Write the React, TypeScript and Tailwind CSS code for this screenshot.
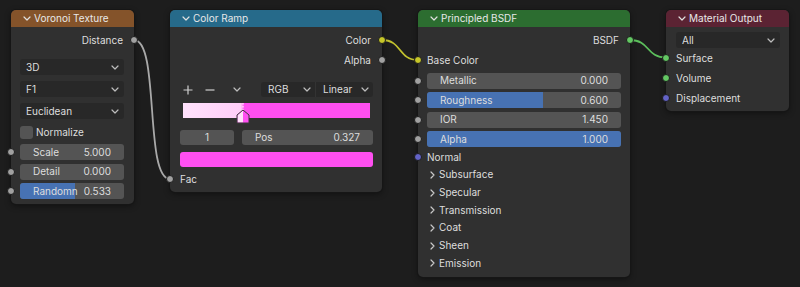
import type { ReactNode } from 'react';

const font = "font-['Inter','Noto_Sans',sans-serif]";

function ChevronDown({ className = '' }: { className?: string }) {
  return (
    <svg width="8" height="5" viewBox="0 0 8 5" className={className}>
      <path d="M1 1l3 3 3-3" fill="none" stroke="currentColor" strokeWidth="1.2" strokeLinecap="round" strokeLinejoin="round" />
    </svg>
  );
}

function ChevronRight() {
  return (
    <svg width="5" height="8" viewBox="0 0 5 8" className="text-[#c8c8c8]">
      <path d="M1 1l3 3-3 3" fill="none" stroke="currentColor" strokeWidth="1.2" strokeLinecap="round" strokeLinejoin="round" />
    </svg>
  );
}

function Socket({ side, color }: { side: 'in' | 'out'; color: string }) {
  return (
    <span
      className={`absolute top-1/2 -translate-y-1/2 w-[8px] h-[8px] rounded-full border border-[#1c1c1c] ${color} ${
        side === 'in' ? 'left-[-4px]' : 'right-[-4px]'
      }`}
    />
  );
}

function Node({
  title,
  header,
  left,
  width,
  children,
}: {
  title: string;
  header: string;
  left: string;
  width: string;
  children: ReactNode;
}) {
  return (
    <div className={`absolute top-[10px] ${left} ${width} rounded-[5px] bg-[#303030] shadow-[0_0_0_1px_#161616,0_2px_6px_rgba(0,0,0,0.45)]`}>
      <div className={`h-[17px] rounded-t-[5px] ${header} flex items-center pl-[12px] gap-[3px] text-[#e8e8e8] text-[10px]`}>
        <ChevronDown className="text-[#e0e0e0]" />
        <span>{title}</span>
      </div>
      {children}
    </div>
  );
}

function Dropdown({ label, className = '' }: { label: string; className?: string }) {
  return (
    <div className={`h-[16px] rounded-[3px] bg-[#282828] flex items-center justify-between pl-[6px] pr-[5px] ${className}`}>
      <span>{label}</span>
      <ChevronDown className="text-[#bdbdbd]" />
    </div>
  );
}

function Slider({ label, value, fill }: { label: string; value: string; fill: number }) {
  return (
    <div className="relative h-[16px] rounded-[3px] bg-[#545454] overflow-hidden">
      <div className="absolute inset-y-0 left-0 bg-[#4772b3]" style={{ width: `${fill * 100}%` }} />
      <div className="relative h-full flex items-center justify-between gap-[6px] px-[13px]">
        <span className="whitespace-nowrap overflow-hidden">{label}</span>
        <span>{value}</span>
      </div>
    </div>
  );
}

function Wires() {
  return (
    <svg width="800" height="287" className="absolute inset-0 pointer-events-none">
      <path d="M134 40 C160 40 144 179 170 179" fill="none" stroke="#a9a9a9" strokeWidth="1.8" />
      <path d="M382 40 C402 40 398 60 418 60" fill="none" stroke="#c2c22e" strokeWidth="1.8" />
      <path d="M630 40 C650 40 646 57.5 666 57.5" fill="none" stroke="#5cbf5c" strokeWidth="1.8" />
    </svg>
  );
}

const grey = 'bg-[#a1a1a1]';
const yellow = 'bg-[#c7c729]';
const green = 'bg-[#63c763]';
const purple = 'bg-[#6363c7]';

export default function App() {
  const panels = ['Subsurface', 'Specular', 'Transmission', 'Coat', 'Sheen', 'Emission'];

  return (
    <div className={`relative w-[800px] h-[287px] overflow-hidden bg-[#1d1d1d] text-[10px] text-[#dedede] ${font}`}>
      <Wires />

      <Node title="Voronoi Texture" header="bg-[#84532a]" left="left-[11px]" width="w-[123px]">
        <div className="relative h-[18px] mt-[4px] flex items-center justify-end pr-[11px]">
          Distance
          <Socket side="out" color={grey} />
        </div>
        <div className="flex flex-col gap-[6px] mt-[10px] pl-[9px] pr-[10px]">
          <Dropdown label="3D" />
          <Dropdown label="F1" />
          <Dropdown label="Euclidean" />
        </div>
        <div className="h-[14px] mt-[6px] pl-[9px] flex items-center gap-[3px]">
          <span className="w-[13px] h-[13px] rounded-[3px] bg-[#545454]" />
          <span>Normalize</span>
        </div>
        <div className="flex flex-col gap-[3.5px] mt-[5px] pb-[5px]">
          {[
            ['Scale', '5.000', 0],
            ['Detail', '0.000', 0],
            ['Randomn', '0.533', 0.533],
          ].map(([l, v, f]) => (
            <div key={l as string} className="relative pl-[9px] pr-[10px]">
              <Socket side="in" color={grey} />
              <Slider label={l as string} value={v as string} fill={f as number} />
            </div>
          ))}
        </div>
      </Node>

      <Node title="Color Ramp" header="bg-[#266a8a]" left="left-[170px]" width="w-[212px]">
        <div className="flex flex-col mt-[3px]">
          <div className="relative h-[20px] flex items-center justify-end pr-[11px]">
            Color
            <Socket side="out" color={yellow} />
          </div>
          <div className="relative h-[20px] flex items-center justify-end pr-[11px]">
            Alpha
            <Socket side="out" color={grey} />
          </div>
        </div>
        <div className="mt-[12px] h-[15px] flex items-center pl-[13px] pr-[9px]">
          <svg width="10" height="10" viewBox="0 0 10 10" className="text-[#d0d0d0]">
            <path d="M5 0.5v9M0.5 5h9" stroke="currentColor" strokeWidth="1.2" />
          </svg>
          <svg width="10" height="10" viewBox="0 0 10 10" className="ml-[12px] text-[#d0d0d0]">
            <path d="M0.5 5h9" stroke="currentColor" strokeWidth="1.2" />
          </svg>
          <ChevronDown className="ml-[18px] text-[#bdbdbd]" />
          <div className="ml-auto flex h-[15px] rounded-[3px] bg-[#282828]">
            <div className="w-[55px] flex items-center justify-between pl-[7px] pr-[4px] border-r border-[#333]">
              <span>RGB</span>
              <ChevronDown className="text-[#bdbdbd]" />
            </div>
            <div className="w-[57px] flex items-center justify-between pl-[7px] pr-[4px]">
              <span>Linear</span>
              <ChevronDown className="text-[#bdbdbd]" />
            </div>
          </div>
        </div>
        <div className="relative mt-[6px] ml-[13px] mr-[12px] h-[15px] bg-[linear-gradient(to_right,#ffe2fc_0%,#ffcdf8_31%,#ff4ff1_32.7%,#ff4ff1_100%)]">
          <svg width="16" height="22" viewBox="0 0 16 22" className="absolute left-[52px] top-0 overflow-visible">
            <path d="M8 0v7" stroke="#ffffff" strokeWidth="1" strokeDasharray="1.5 1.5" />
            <path d="M2 12 L8 7 L14 12 V20 H2 Z" fill="#ff4ff1" />
            <path d="M2.5 12.2 L8 7.6 V19.5 H2.5 Z" fill="#ffe0fb" />
            <path d="M2 12 L8 7 L14 12 V20 H2 Z" fill="none" stroke="#3a3a3a" strokeWidth="1" />
          </svg>
        </div>
        <div className="mt-[12px] flex gap-[8px] pl-[10px] pr-[9px]">
          <div className="w-[54px] h-[15px] rounded-[3px] bg-[#545454] flex items-center justify-center">1</div>
          <div className="flex-1 h-[15px] rounded-[3px] bg-[#545454] flex items-center justify-between pl-[13px] pr-[13px]">
            <span>Pos</span>
            <span>0.327</span>
          </div>
        </div>
        <div className="mt-[7px] mr-[9px] ml-[10px] h-[15px] rounded-[3px] bg-[#ff4ff1]" />
        <div className="relative h-[18px] mt-[3px] mb-[4px] flex items-center pl-[10px]">
          <Socket side="in" color={grey} />
          Fac
        </div>
      </Node>

      <Node title="Principled BSDF" header="bg-[#2c6d30]" left="left-[418px]" width="w-[212px]">
        <div className="flex flex-col mt-[3px]">
          <div className="relative h-[20px] flex items-center justify-end pr-[11px]">
            BSDF
            <Socket side="out" color={green} />
          </div>
          <div className="relative h-[20px] flex items-center pl-[9px]">
            <Socket side="in" color={yellow} />
            Base Color
          </div>
        </div>
        <div className="flex flex-col gap-[3.5px] mt-[2.5px]">
          {[
            ['Metallic', '0.000', 0],
            ['Roughness', '0.600', 0.6],
            ['IOR', '1.450', 0],
            ['Alpha', '1.000', 1],
          ].map(([l, v, f]) => (
            <div key={l as string} className="relative pl-[9px] pr-[9px]">
              <Socket side="in" color={grey} />
              <Slider label={l as string} value={v as string} fill={f as number} />
            </div>
          ))}
        </div>
        <div className="relative h-[18px] mt-[1px] flex items-center pl-[9px]">
          <Socket side="in" color={purple} />
          Normal
        </div>
        <div className="flex flex-col pb-[5px]">
          {panels.map((p) => (
            <div key={p} className="h-[17.7px] flex items-center pl-[12px] gap-[4px]">
              <ChevronRight />
              <span>{p}</span>
            </div>
          ))}
        </div>
      </Node>

      <Node title="Material Output" header="bg-[#5b2333]" left="left-[666px]" width="w-[123px]">
        <Dropdown label="All" className="mt-[5px] ml-[10px] mr-[9px] h-[15px]" />
        <div className="flex flex-col pb-[3px]">
          <div className="relative h-[20px] flex items-center pl-[10px]">
            <Socket side="in" color={green} />
            Surface
          </div>
          <div className="relative h-[20px] flex items-center pl-[10px]">
            <Socket side="in" color={green} />
            Volume
          </div>
          <div className="relative h-[20px] flex items-center pl-[10px]">
            <Socket side="in" color={purple} />
            Displacement
          </div>
        </div>
      </Node>
    </div>
  );
}
